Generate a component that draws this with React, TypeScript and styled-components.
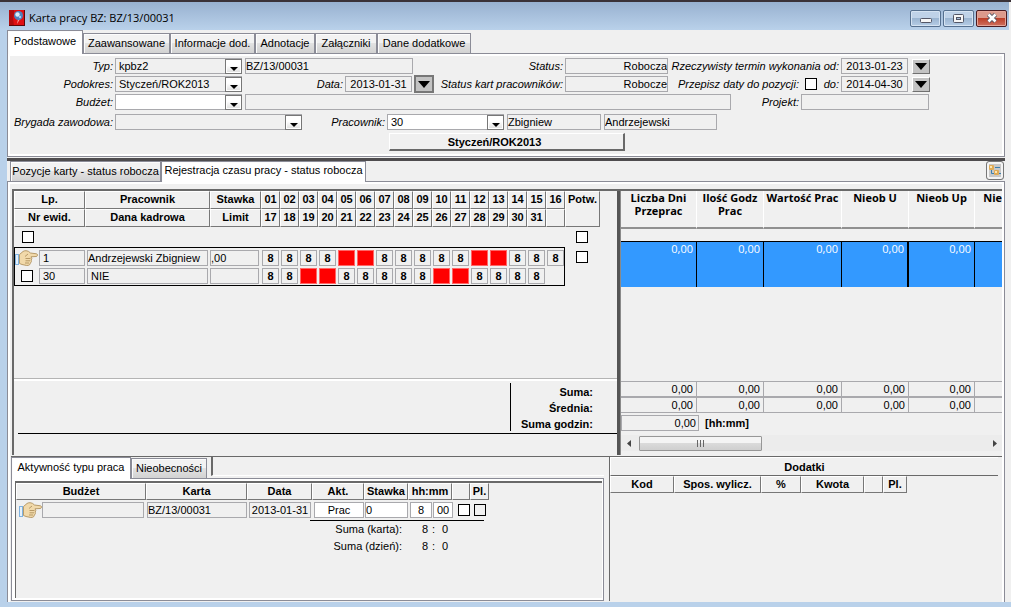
import React from 'react';
import styled, { createGlobalStyle, css } from 'styled-components';

const grey = '#f0f0f0';
const line = '#a9a9ad';
const edge = '#8b8c97';
const dark = '#696969';
const frame = '#b9d1ea';

const Global = createGlobalStyle`
  *, *::before, *::after { box-sizing: border-box; }
  html, body { margin: 0; background: ${grey}; }
  body, input, select, button {
    font-family: 'Liberation Sans', Arial, sans-serif;
    font-size: 11px;
    color: #000;
  }
`;

const Window = styled.div`
  display: flex;
  flex-direction: column;
  min-height: 100vh;
  background: ${grey};
  border-top: 2px solid #3a3238;
  overflow: hidden;
`;

const TitleBar = styled.header`
  display: flex;
  align-items: center;
  gap: 4px;
  height: 28px;
  padding: 4px 2px 0 9px;
  margin-right: 2px;
  background: linear-gradient(#98b1d0, ${frame});
`;

const Title = styled.h1`
  flex: 1;
  margin: 0;
  font: 400 11px/16px 'Open Sans', 'Noto Sans', sans-serif;
`;

const WindowButtons = styled.div`
  display: flex;
  gap: 2px;
`;

const WindowButton = styled.button<{ $close?: boolean }>`
  width: 31px;
  height: 17px;
  padding: 0;
  display: grid;
  place-items: center;
  border: 1px solid ${p => (p.$close ? '#4b1c22' : '#56708f')};
  border-radius: 2px;
  box-shadow: inset 0 0 0 1px ${p => (p.$close ? '#e5a598' : '#d5e3f2')};
  background: ${p =>
    p.$close
      ? 'linear-gradient(#dc9a8c 0 45%, #bd4029 50%, #cf7160)'
      : 'linear-gradient(#bfd2e8 0 45%, #9bb5d1 50%, #b6cde6)'};
`;

const Frame = styled.div`
  flex: 1;
  display: flex;
  flex-direction: column;
  border: solid ${frame};
  border-width: 0 0 5px 7px;
  padding-right: 6px;
`;

const TabRow = styled.div<{ $inset?: number; $h: number }>`
  display: flex;
  align-items: flex-end;
  padding-left: ${p => p.$inset ?? 0}px;
  height: ${p => p.$h}px;
`;

const Tab = styled.button<{ $active?: boolean; $w: number }>`
  width: ${p => p.$w}px;
  flex: none;
  height: 20px;
  padding: 0 0 1px;
  border: 1px solid ${edge};
  border-bottom: 0;
  font-size: 11px;
  line-height: 14px;
  white-space: nowrap;
  background: linear-gradient(#f2f2f2 0 45%, #e2e2e2 50%, #d2d2d2);
  box-shadow: inset 1px 1px 0 #fcfcfc;
  ${p =>
    p.$active &&
    css`
      position: relative;
      height: calc(100% + 1px);
      margin-bottom: -1px;
      padding-bottom: 4px;
      background: #fff;
    `}
`;

const FormPanel = styled.section`
  border: 1px solid ${edge};
  outline: 2px solid #fff;
  outline-offset: -3px;
  padding: 3px 3px 4px;
  height: 104px;
`;

const FormRow = styled.div<{ $gap?: number }>`
  display: flex;
  align-items: center;
  height: 18px;
  margin-top: ${p => p.$gap ?? 0}px;
`;

const Label = styled.label<{ $w: number }>`
  width: ${p => p.$w}px;
  flex: none;
  padding-right: 2px;
  text-align: right;
  font-style: italic;
  white-space: nowrap;
`;

const Field = styled.input<{ $w?: number; $align?: string; $white?: boolean; $pad?: number }>`
  width: ${p => (p.$w ? p.$w + 'px' : '100%')};
  height: 16px;
  flex: none;
  display: block;
  margin: 0;
  padding: 0 ${p => p.$pad ?? 0}px;
  border: 1px solid ${line};
  border-radius: 0;
  outline: 0;
  background: ${p => (p.$white ? '#fff' : grey)};
  text-align: ${p => p.$align ?? 'left'};
`;

const Gap = styled.span<{ $w: number }>`
  width: ${p => p.$w}px;
  flex: none;
`;

const ComboBox = styled.div<{ $w: number }>`
  position: relative;
  width: ${p => p.$w}px;
  flex: none;
`;

const ComboSelect = styled.select<{ $white?: boolean }>`
  appearance: none;
  display: block;
  width: 100%;
  height: 16px;
  margin: 0;
  padding: 0 18px 0 3px;
  border: 1px solid ${line};
  border-radius: 0;
  background: ${p => (p.$white ? '#fff' : grey)};
`;

const ComboArrow = styled.span`
  position: absolute;
  right: 0;
  top: 1px;
  width: 17px;
  height: 15px;
  display: grid;
  place-items: center;
  padding-top: 4px;
  border: 1px solid #777;
  box-shadow: inset 0 0 0 1px #fff;
  background: linear-gradient(#fff 0 40%, #dedede);
  pointer-events: none;
`;

const DateButton = styled.button<{ $framed?: boolean }>`
  width: ${p => (p.$framed ? 20 : 18)}px;
  height: ${p => (p.$framed ? 18 : 15)}px;
  flex: none;
  padding: 0;
  display: grid;
  place-items: center;
  border: ${p => (p.$framed ? '2px solid' : '1px solid')};
  border-color: ${p => (p.$framed ? '#777' : '#fff #707070 #707070 #fff')};
  background: #c3c3c3;
`;

const Check = styled.input<{ $grey?: boolean }>`
  appearance: none;
  display: block;
  flex: none;
  width: 12px;
  height: 12px;
  margin: 0;
  border: 1px solid #000;
  background: ${p => (p.$grey ? grey : '#fff')};
`;

const PeriodButton = styled.button`
  display: block;
  width: 236px;
  height: 18px;
  margin: 2px 0 0 378px;
  padding: 0 24px 0 0;
  border: solid;
  border-width: 1px 2px 2px 1px;
  border-color: #fff ${dark} ${dark} #fff;
  background: ${grey};
  font-weight: 700;
`;

const SplitterBar = styled.div`
  height: 3px;
  margin-top: 1px;
  background: #4e4c4e;
`;

const TabFiller = styled.div`
  flex: 1;
  align-self: stretch;
  display: flex;
  justify-content: flex-end;
  align-items: flex-start;
  padding-right: 1px;
`;

const TreeButton = styled.button`
  width: 18px;
  height: 19px;
  padding: 0;
  display: grid;
  place-items: center;
  border: 1px solid #777;
  border-radius: 3px;
  box-shadow: inset 0 0 0 2px #f4f4f4;
  background: #c8c8c8;
`;

const WorkPanel = styled.section`
  flex: 1;
  display: flex;
  flex-direction: column;
  border: solid ${edge};
  border-width: 1px 1px 0 1px;
  box-shadow: inset 2px 2px 0 #fff, inset -2px 0 0 #fff;
  padding: 7px 2px 0 4px;
`;

const Upper = styled.div`
  flex: 1;
  display: flex;
  min-height: 265px;
  border-top: 2px solid ${dark};
  border-left: 2px solid ${dark};
`;

const Sheet = styled.div`
  width: 603px;
  flex: none;
  display: flex;
  flex-direction: column;
`;

const SplitterColumn = styled.div`
  width: 4px;
  flex: none;
  background: #555;
  border-right: 1px solid #8a8a8a;
`;

const Table = styled.table<{ $w?: number }>`
  width: ${p => (p.$w ? p.$w + 'px' : '100%')};
  table-layout: fixed;
  border-collapse: separate;
  border-spacing: 0;
  th, td { padding: 0; }
`;

const Th = styled.th`
  height: 17px;
  border: 1px solid;
  border-color: #fff #777 #777 #fff;
  background: ${grey};
  font-size: 11px;
  line-height: 15px;
  white-space: nowrap;
  overflow: hidden;
`;

const DayTh = styled(Th)`
  height: 18px;
  line-height: 14px;
  vertical-align: top;
`;

const DayTd = styled.td<{ $h: number; $top?: boolean; $bottom?: boolean; $left?: boolean; $right?: boolean }>`
  height: ${p => p.$h}px;
  vertical-align: ${p => (p.$top ? 'bottom' : 'middle')};
  border: solid #000;
  border-width: ${p => (p.$top ? 1 : 0)}px ${p => (p.$right ? 1 : 0)}px ${p => (p.$bottom ? 1 : 0)}px ${p => (p.$left ? 1 : 0)}px;
`;

const CellLine = styled.div<{ $l?: number; $r?: number }>`
  display: flex;
  align-items: center;
  padding: 0 ${p => p.$r ?? 0}px 0 ${p => p.$l ?? 0}px;
`;

const Marker = styled.span<{ $start?: boolean }>`
  width: 24px;
  flex: none;
  display: grid;
  place-items: center ${p => (p.$start ? 'start' : 'center')};
`;

const DayField = styled(Field)<{ $off?: boolean }>`
  width: 17px;
  margin-left: 1px;
  font-weight: 700;
  text-align: center;
  ${p =>
    p.$off &&
    css`
      background: #f00;
      border-color: #f66;
    `}
`;

const SheetFooter = styled.div`
  margin-top: auto;
  height: 77px;
  border-top: 1px solid #b4b4b4;
  box-shadow: inset 0 2px 0 #fff;
`;

const Totals = styled.div`
  margin: 4px 0 0 4px;
  height: 51px;
  border-bottom: 1px solid #000;
  display: flex;
  justify-content: flex-end;
`;

const TotalsList = styled.div`
  width: 107px;
  height: 48px;
  padding: 1px 24px 0 0;
  border-left: 1px solid #000;
  text-align: right;
  font-weight: 700;
  line-height: 16px;
  white-space: nowrap;
`;

const Summary = styled.div`
  flex: 1;
  min-width: 0;
  display: flex;
  flex-direction: column;
  overflow: hidden;
`;

const SummaryTh = styled.th`
  height: 38px;
  vertical-align: top;
  border-right: 1px solid #fff;
  border-bottom: 2px solid #909090;
  font: 700 11px/13px 'Open Sans', 'Noto Sans', sans-serif;
  &:last-child {
    text-align: right;
    border-right: 0;
  }
`;

const SummarySpacer = styled.td`
  height: 12px;
`;

const BlueTd = styled.td`
  height: 46px;
  vertical-align: top;
  text-align: right;
  color: #fff;
  background: #3399ff;
  border: solid #000;
  border-width: 1px 1px 0 0;
  font: 400 11px/14px 'Open Sans', 'Noto Sans', sans-serif;
  && { padding-right: 3px; }
  &:nth-child(4) { border-right-width: 2px; }
  &:last-child { border-right: 0; }
`;

const SumTd = styled.td`
  height: 16px;
  text-align: right;
  border: solid ${line};
  border-width: 1px 1px 1px 0;
  && { padding-right: 3px; }
  &:last-child { border-right: 0; }
`;

const SummaryFooter = styled.div`
  margin-top: auto;
  flex: none;
`;

const HoursRow = styled.label`
  display: flex;
  align-items: center;
  gap: 6px;
  margin: 2px 0 4px;
  font-weight: 700;
`;

const ScrollBar = styled.div`
  display: flex;
  align-items: center;
  height: 16px;
  margin-bottom: 4px;
  padding: 0 4px 0 5px;
  background: #ececec;
`;

const ScrollThumb = styled.div`
  width: 123px;
  height: 15px;
  margin: 0 auto 0 8px;
  display: grid;
  place-items: center;
  border: 1px solid #979797;
  border-radius: 1px;
  background: linear-gradient(#f4f4f4 0 45%, #dadada 50%, #cfcfcf);
`;

const Lower = styled.div`
  display: flex;
  gap: 5px;
  height: 146px;
  border-top: 1px solid ${dark};
  margin: 1px 0 0 -1px;
`;

const Activity = styled.div`
  width: 593px;
  flex: none;
  display: flex;
  flex-direction: column;
`;

const TabInset = styled.div`
  flex: 1;
  height: 20px;
  margin: 0 0 2px 4px;
  border-left: 2px solid ${dark};
  border-bottom: 1px solid #fff;
`;

const ActivityPanel = styled.div`
  flex: 1;
  margin-bottom: 1px;
  border: 1px solid ${edge};
  padding: 2px 1px 2px 3px;
  background: #fff;
`;

const ActivitySheet = styled.div`
  height: 100%;
  border-top: 2px solid ${dark};
  border-left: 1px solid ${dark};
  background: ${grey};
`;

const EntryTd = styled.td`
  height: 20px;
  vertical-align: middle;
`;

const SumLine = styled.div<{ $first?: boolean }>`
  display: flex;
  width: 174px;
  margin-left: 294px;
  line-height: 17px;
  border-top: ${p => (p.$first ? '1px solid #000' : '0')};
  span:nth-child(1) { width: 92px; text-align: right; }
  span:nth-child(2) { width: 26px; text-align: right; }
  span:nth-child(3) { width: 7px; text-align: right; }
  span:nth-child(4) { width: 13px; text-align: right; }
`;

const Extras = styled.div`
  flex: 1;
  margin: 0 4px 1px 0;
  border-left: 1px solid ${dark};
`;

const ExtrasTitle = styled.h2`
  margin: 0;
  height: 19px;
  border: solid;
  border-width: 1px 0 1px 1px;
  border-color: #fff #fff ${dark} #fff;
  font-size: 11px;
  line-height: 18px;
  text-align: center;
`;

const Triangle = ({ w = 8, h = 4 }: { w?: number; h?: number }) => (
  <svg width={w} height={h} viewBox="0 0 8 4" preserveAspectRatio="none" aria-hidden="true">
    <path d="M0 0h8L4 4z" fill="#000" />
  </svg>
);

const Hand = () => (
  <svg width="23" height="16" viewBox="0 0 23 16" aria-hidden="true">
    <path d="M0 4h4v11H0z" fill="#7fb2e0" />
    <path d="M1 5h2v9H1z" fill="#e6f1fb" />
    <path
      d="M4.500 4.500L8 1.500q1-.8 3-.8 2.500 0 4.500 2.300l6 .8q1.300.4 1 1.600-.2.900-1.500 1.100l-5 .3.800 1.700-.6 1.600.2 1.500-1 1.500-.7 1.600q-1 .9-3 .8L7 14.500l-2.500-1z"
      fill="#f1d9aa"
      stroke="#b0925f"
      strokeWidth=".9"
    />
    <path d="M10 6.500l3-2.500M10.500 8.500h5M10.500 10.800h4.500M10 13h4" stroke="#b0925f" strokeWidth=".9" fill="none" />
  </svg>
);

const Combo = ({ id, w, value, white }: { id: string; w: number; value: string; white?: boolean }) => (
  <ComboBox $w={w}>
    <ComboSelect id={id} $white={white} defaultValue={value}>
      <option value={value}>{value}</option>
    </ComboSelect>
    <ComboArrow>
      <Triangle />
    </ComboArrow>
  </ComboBox>
);

const pad = (n: number) => String(n).padStart(2, '0');
const firstHalf = Array.from({ length: 16 }, (_, i) => i + 1);
const secondHalf = Array.from({ length: 15 }, (_, i) => i + 17);
const daysOff = [5, 6, 12, 13, 19, 20, 26, 27];

const Day = ({ day }: { day: number }) => {
  const off = daysOff.includes(day);
  return <DayField readOnly aria-label={`Dzień ${day}`} value={off ? '' : '8'} $off={off} />;
};

const mainTabs: [string, number][] = [
  ['Zaawansowane', 87],
  ['Informacje dod.', 85],
  ['Adnotacje', 60],
  ['Załączniki', 62],
  ['Dane dodatkowe', 94],
];

const summaryCols: [string, number | undefined][] = [
  ['Liczba Dni Przeprac', 76],
  ['Ilość Godz Prac', 67],
  ['Wartość Prac', 78],
  ['Nieob U', 67],
  ['Nieob Up', 66],
  ['Nie', undefined],
];

const SummaryCols = () => (
  <colgroup>
    {summaryCols.map(([name, w]) => (
      <col key={name} width={w} />
    ))}
  </colgroup>
);

export default function App() {
  return (
    <>
      <Global />
      <Window>
        <TitleBar>
          <svg width="16" height="16" viewBox="0 0 16 16" aria-hidden="true">
            <rect width="16" height="16" fill="#e01013" />
            <path d="M0 0h5v4L4 8l1 8H0z" fill="#b00c0f" />
            <path d="M0 15h16v1H0zM15 0h1v16h-1z" fill="#5c0809" />
            <path d="M9 9l-1 5 3-5z" fill="#f5a0a0" />
            <circle cx="9.500" cy="5.500" r="4.500" fill="#4d83bd" />
            <circle cx="8.500" cy="4.500" r="2.200" fill="#dcecf8" />
            <circle cx="11" cy="7" r="1.200" fill="#a9cdec" />
          </svg>
          <Title>Karta pracy BZ: BZ/13/00031</Title>
          <WindowButtons>
            <WindowButton aria-label="Minimalizuj">
              <svg width="12" height="9" viewBox="0 0 12 9">
                <rect x=".5" y="4.500" width="11" height="4" rx="1" fill="#f6f6f6" stroke="#535666" />
              </svg>
            </WindowButton>
            <WindowButton aria-label="Maksymalizuj">
              <svg width="11" height="9" viewBox="0 0 11 9">
                <rect x=".5" y=".5" width="10" height="8" rx="1" fill="#f6f6f6" stroke="#535666" />
                <rect x="3.500" y="3.500" width="4" height="2" fill="#a9c0dc" stroke="#535666" />
              </svg>
            </WindowButton>
            <WindowButton $close aria-label="Zamknij">
              <svg width="12" height="10" viewBox="0 0 12 10">
                <path d="M2.500 1.500l7 7M9.500 1.500l-7 7" stroke="#535666" strokeWidth="4.400" />
                <path d="M2.500 1.500l7 7M9.500 1.500l-7 7" stroke="#fff" strokeWidth="2.600" />
              </svg>
            </WindowButton>
          </WindowButtons>
        </TitleBar>
        <Frame>
          <TabRow $h={23}>
            <Tab $active $w={76}>Podstawowe</Tab>
            {mainTabs.map(([name, w]) => (
              <Tab key={name} $w={w}>{name}</Tab>
            ))}
          </TabRow>
          <FormPanel>
            <FormRow>
              <Label $w={104} htmlFor="typ">Typ:</Label>
              <Combo id="typ" w={127} value="kpbz2" />
              <Gap $w={3} />
              <Field readOnly aria-label="Numer karty" $w={168} value="BZ/13/00031" />
              <Label $w={152} htmlFor="status">Status:</Label>
              <Field readOnly id="status" $w={103} $align="right" value="Robocza" />
              <Label $w={173} htmlFor="od">Rzeczywisty termin wykonania od:</Label>
              <Field readOnly id="od" $w={67} $align="center" value="2013-01-23" />
              <Gap $w={4} />
              <DateButton aria-label="Wybierz datę od"><Triangle w={12} h={7} /></DateButton>
            </FormRow>
            <FormRow>
              <Label $w={104} htmlFor="podokres">Podokres:</Label>
              <Combo id="podokres" w={127} value="Styczeń/ROK2013" />
              <Label $w={103} htmlFor="data">Data:</Label>
              <Field readOnly id="data" $w={67} $align="center" value="2013-01-31" />
              <Gap $w={2} />
              <DateButton $framed aria-label="Wybierz datę"><Triangle w={12} h={7} /></DateButton>
              <Label $w={131} htmlFor="statuskart">Status kart pracowników:</Label>
              <Field readOnly id="statuskart" $w={103} $align="right" value="Robocze" />
              <Label $w={133} htmlFor="przepisz">Przepisz daty do pozycji:</Label>
              <Gap $w={4} />
              <Check type="checkbox" id="przepisz" />
              <Label $w={24} htmlFor="do">do:</Label>
              <Field readOnly id="do" $w={67} $align="center" value="2014-04-30" />
              <Gap $w={4} />
              <DateButton aria-label="Wybierz datę do"><Triangle w={12} h={7} /></DateButton>
            </FormRow>
            <FormRow>
              <Label $w={104} htmlFor="budzet">Budżet:</Label>
              <Combo id="budzet" w={127} value="" white />
              <Gap $w={3} />
              <Field readOnly aria-label="Opis budżetu" $w={486} value="" />
              <Label $w={70} htmlFor="projekt">Projekt:</Label>
              <Field readOnly id="projekt" $w={128} value="" />
            </FormRow>
            <FormRow $gap={2}>
              <Label $w={104} htmlFor="brygada">Brygada zawodowa:</Label>
              <Combo id="brygada" w={187} value="" />
              <Label $w={85} htmlFor="pracownik">Pracownik:</Label>
              <Combo id="pracownik" w={117} value="30" white />
              <Gap $w={3} />
              <Field readOnly aria-label="Imię" $w={94} value="Zbigniew" />
              <Gap $w={3} />
              <Field readOnly aria-label="Nazwisko" $w={113} value="Andrzejewski" />
            </FormRow>
            <PeriodButton>Styczeń/ROK2013</PeriodButton>
          </FormPanel>
          <SplitterBar />
          <TabRow $inset={3} $h={20}>
            <Tab $w={151}>Pozycje karty - status robocza</Tab>
            <Tab $active $w={205}>Rejestracja czasu pracy - status robocza</Tab>
            <TabFiller>
              <TreeButton aria-label="Drzewo">
                <svg width="12" height="11" viewBox="0 0 12 11">
                  <path d="M2.500 3v5.500h3M6 2.500h5M10 8.500h2" stroke="#3b7fae" fill="none" />
                  <rect width="5" height="5" rx="1" fill="#e0ab55" />
                  <rect x="5" y="5" width="5" height="5" rx="1" fill="#e0ab55" />
                  <path d="M1 1h2v2H1zM6 6h2v2H6z" fill="#fbe6b5" />
                </svg>
              </TreeButton>
            </TabFiller>
          </TabRow>
          <WorkPanel>
            <Upper>
              <Sheet>
                <Table $w={586}>
                  <colgroup>
                    <col width={71} />
                    <col width={125} />
                    <col width={51} />
                    {firstHalf.map(d => <col key={d} width={19} />)}
                    <col width={35} />
                  </colgroup>
                  <thead>
                    <tr>
                      <DayTh>Lp.</DayTh>
                      <DayTh>Pracownik</DayTh>
                      <DayTh>Stawka</DayTh>
                      {firstHalf.map(d => <DayTh key={d}>{pad(d)}</DayTh>)}
                      <DayTh rowSpan={2}>Potw.</DayTh>
                    </tr>
                    <tr>
                      <DayTh>Nr ewid.</DayTh>
                      <DayTh>Dana kadrowa</DayTh>
                      <DayTh>Limit</DayTh>
                      {secondHalf.map(d => <DayTh key={d}>{pad(d)}</DayTh>)}
                      <DayTh />
                    </tr>
                  </thead>
                  <tbody>
                    <tr>
                      <DayTd $h={20} colSpan={19}>
                        <CellLine $l={8}><Check type="checkbox" aria-label="Zaznacz wszystkie" /></CellLine>
                      </DayTd>
                      <DayTd $h={20}>
                        <CellLine $l={11}><Check type="checkbox" aria-label="Potwierdź wszystkie" /></CellLine>
                      </DayTd>
                    </tr>
                    <tr>
                      <DayTd $h={19} $top $left>
                        <CellLine>
                          <Marker $start><Hand /></Marker>
                          <Field readOnly aria-label="Lp." $w={46} $pad={3} value="1" />
                        </CellLine>
                      </DayTd>
                      <DayTd $h={19} $top>
                        <CellLine $l={2} $r={2}><Field readOnly aria-label="Pracownik" value="Andrzejewski Zbigniew" /></CellLine>
                      </DayTd>
                      <DayTd $h={19} $top>
                        <CellLine $r={2}><Field readOnly aria-label="Stawka" value=",00" /></CellLine>
                      </DayTd>
                      {firstHalf.map(d => (
                        <DayTd key={d} $h={19} $top $right={d === 16}><Day day={d} /></DayTd>
                      ))}
                      <DayTd $h={19}>
                        <CellLine $l={11}><Check type="checkbox" aria-label="Potwierdź" /></CellLine>
                      </DayTd>
                    </tr>
                    <tr>
                      <DayTd $h={20} $bottom $left>
                        <CellLine>
                          <Marker><Check type="checkbox" aria-label="Zaznacz" /></Marker>
                          <Field readOnly aria-label="Nr ewid." $w={46} $pad={3} value="30" />
                        </CellLine>
                      </DayTd>
                      <DayTd $h={20} $bottom>
                        <CellLine $l={2} $r={2}><Field readOnly aria-label="Dana kadrowa" $pad={3} value="NIE" /></CellLine>
                      </DayTd>
                      <DayTd $h={20} $bottom>
                        <CellLine $r={2}><Field readOnly aria-label="Limit" value="" /></CellLine>
                      </DayTd>
                      {secondHalf.map(d => (
                        <DayTd key={d} $h={20} $bottom><Day day={d} /></DayTd>
                      ))}
                      <DayTd $h={20} $bottom $right />
                      <td />
                    </tr>
                  </tbody>
                </Table>
                <SheetFooter>
                  <Totals>
                    <TotalsList>
                      <div>Suma:</div>
                      <div>Średnia:</div>
                      <div>Suma godzin:</div>
                    </TotalsList>
                  </Totals>
                </SheetFooter>
              </Sheet>
              <SplitterColumn />
              <Summary>
                <Table>
                  <SummaryCols />
                  <thead>
                    <tr>{summaryCols.map(([name]) => <SummaryTh key={name}>{name}</SummaryTh>)}</tr>
                  </thead>
                  <tbody>
                    <tr><SummarySpacer colSpan={6} /></tr>
                    <tr>{summaryCols.map(([name], i) => <BlueTd key={name}>{i < 5 && '0,00'}</BlueTd>)}</tr>
                  </tbody>
                </Table>
                <SummaryFooter>
                  <Table>
                    <SummaryCols />
                    <tbody>
                      {[0, 1].map(r => (
                        <tr key={r}>{summaryCols.map(([name], i) => <SumTd key={name}>{i < 5 && '0,00'}</SumTd>)}</tr>
                      ))}
                    </tbody>
                  </Table>
                  <HoursRow>
                    <Field readOnly $w={78} $align="right" $pad={2} value="0,00" />
                    [hh:mm]
                  </HoursRow>
                  <ScrollBar>
                    <svg width="5" height="7" viewBox="0 0 5 7"><path d="M5 0v7L1 3.500z" fill="#444" /></svg>
                    <ScrollThumb>
                      <svg width="9" height="7" viewBox="0 0 9 7"><path d="M1.500 0v7M4.500 0v7M7.500 0v7" stroke="#666" /></svg>
                    </ScrollThumb>
                    <svg width="5" height="7" viewBox="0 0 5 7"><path d="M0 0v7l4-3.500z" fill="#444" /></svg>
                  </ScrollBar>
                </SummaryFooter>
              </Summary>
            </Upper>
            <Lower>
              <Activity>
                <TabRow $h={21}>
                  <Tab $active $w={120}>Aktywność typu praca</Tab>
                  <Tab $w={76}>Nieobecności</Tab>
                  <TabInset />
                </TabRow>
                <ActivityPanel>
                  <ActivitySheet>
                    <Table $w={473}>
                      <colgroup>
                        {[130, 101, 65, 52, 44, 44, 18, 19].map((w, i) => <col key={i} width={w} />)}
                      </colgroup>
                      <thead>
                        <tr>
                          {['Budżet', 'Karta', 'Data', 'Akt.', 'Stawka', 'hh:mm', '', 'Pl.'].map((h, i) => (
                            <Th key={i}>{h}</Th>
                          ))}
                        </tr>
                      </thead>
                      <tbody>
                        <tr>
                          <EntryTd>
                            <CellLine $l={2} $r={1}>
                              <Marker><Hand /></Marker>
                              <Field readOnly aria-label="Budżet" $w={102} value="" />
                            </CellLine>
                          </EntryTd>
                          <EntryTd><CellLine $l={1}><Field readOnly aria-label="Karta" value="BZ/13/00031" /></CellLine></EntryTd>
                          <EntryTd><CellLine $l={2} $r={1}><Field readOnly aria-label="Data" $align="center" value="2013-01-31" /></CellLine></EntryTd>
                          <EntryTd><CellLine $l={2}><Field aria-label="Akt." $white $align="center" defaultValue="Prac" /></CellLine></EntryTd>
                          <EntryTd><CellLine $l={1}><Field aria-label="Stawka" $white defaultValue="0" /></CellLine></EntryTd>
                          <EntryTd>
                            <CellLine $l={2}>
                              <Field aria-label="Godziny" $w={22} $white $align="center" defaultValue="8" />
                              <Gap $w={1} />
                              <Field aria-label="Minuty" $w={20} $white $align="center" defaultValue="00" />
                            </CellLine>
                          </EntryTd>
                          <EntryTd><CellLine $l={6}><Check type="checkbox" aria-label="Wybierz" /></CellLine></EntryTd>
                          <EntryTd><CellLine $l={4}><Check type="checkbox" $grey aria-label="Pl." /></CellLine></EntryTd>
                        </tr>
                      </tbody>
                    </Table>
                    <SumLine $first><span>Suma (karta):</span><span>8</span><span>:</span><span>0</span></SumLine>
                    <SumLine><span>Suma (dzień):</span><span>8</span><span>:</span><span>0</span></SumLine>
                  </ActivitySheet>
                </ActivityPanel>
              </Activity>
              <Extras>
                <ExtrasTitle>Dodatki</ExtrasTitle>
                <Table $w={297}>
                  <colgroup>
                    {[64, 87, 40, 63, 19, 24].map((w, i) => <col key={i} width={w} />)}
                  </colgroup>
                  <thead>
                    <tr>{['Kod', 'Spos. wylicz.', '%', 'Kwota', '', 'Pl.'].map((h, i) => <Th key={i}>{h}</Th>)}</tr>
                  </thead>
                </Table>
              </Extras>
            </Lower>
          </WorkPanel>
        </Frame>
      </Window>
    </>
  );
}
